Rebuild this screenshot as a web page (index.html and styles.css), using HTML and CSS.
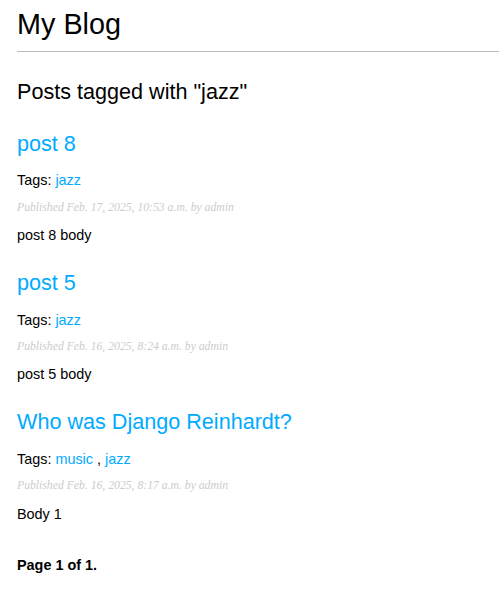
FILE: index.html
```html
<!DOCTYPE html>
<html>
<head>
<meta charset="utf-8">
<title>My Blog</title>
<link rel="stylesheet" href="styles.css">
</head>
<body>
<div class="content">
  <h1 class="site-title">My Blog</h1>
  <h2 class="tag-heading">Posts tagged with "jazz"</h2>

  <h2 class="post-title"><a href="#">post 8</a></h2>
  <p class="tags">Tags: <a href="#">jazz</a></p>
  <p class="date">Published Feb. 17, 2025, 10:53 a.m. by admin</p>
  <p class="body">post 8 body</p>

  <h2 class="post-title"><a href="#">post 5</a></h2>
  <p class="tags">Tags: <a href="#">jazz</a></p>
  <p class="date">Published Feb. 16, 2025, 8:24 a.m. by admin</p>
  <p class="body">post 5 body</p>

  <h2 class="post-title"><a href="#">Who was Django Reinhardt?</a></h2>
  <p class="tags">Tags: <a href="#">music</a> , <a href="#">jazz</a></p>
  <p class="date">Published Feb. 16, 2025, 8:17 a.m. by admin</p>
  <p class="body">Body 1</p>

  <div class="pagination"><span class="current">Page 1 of 1.</span></div>
</div>
</body>
</html>
```

FILE: styles.css
```css
html, body {
  margin: 0;
  padding: 0;
  background: #fff;
}
body {
  font-family: "Liberation Sans", Arial, Helvetica, sans-serif;
  font-size: 14.4px;
  color: #000;
}
a {
  color: #00abff;
  text-decoration: none;
}
.content {
  padding: 0 0 0 17px;
  overflow: hidden;
}
.site-title {
  font-size: 28.8px;
  font-weight: normal;
  margin: 8px 0 0;
  padding: 0 0 10px 0;
  border-bottom: 1px solid #bbb;
}
.tag-heading,
.post-title {
  font-size: 21.6px;
  font-weight: normal;
  margin: 27px 0 0;
}
.post-title {
  margin-top: 26px;
}
.tags {
  margin: 15.4px 0 12.4px;
}
.body {
  margin: 13.4px 0 27px;
}
.date {
  color: #ccc;
  font-family: "Liberation Serif", Georgia, serif;
  font-style: italic;
  font-size: 11.7px;
  line-height: 13px;
  margin: 12.4px 0 13.4px;
}
.pagination {
  margin: 35px 0;
  font-weight: bold;
}
```
